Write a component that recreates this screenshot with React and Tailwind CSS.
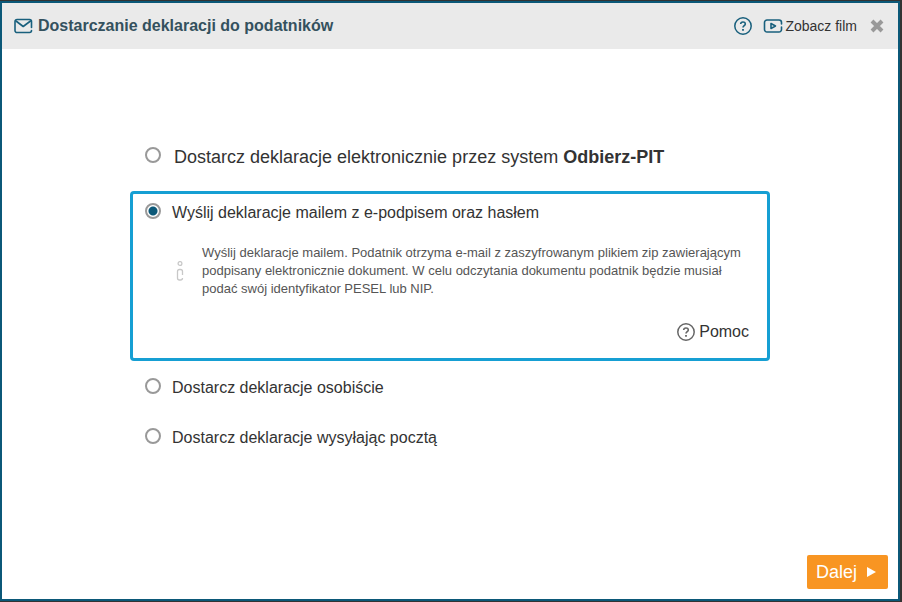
const options = [
  {
    id: 'system',
    large: true,
    label: (
      <>
        Dostarcz deklaracje elektronicznie przez system <b>Odbierz-PIT</b>
      </>
    ),
  },
  {
    id: 'mail',
    label: 'Wyślij deklaracje mailem z e-podpisem oraz hasłem',
    info: 'Wyślij deklaracje mailem. Podatnik otrzyma e-mail z zaszyfrowanym plikiem zip zawierającym podpisany elektronicznie dokument. W celu odczytania dokumentu podatnik będzie musiał podać swój identyfikator PESEL lub NIP.',
  },
  { id: 'personal', label: 'Dostarcz deklaracje osobiście' },
  { id: 'post', label: 'Dostarcz deklaracje wysyłając pocztą' },
]

function MailIcon() {
  return (
    <svg width="20" height="16" viewBox="0 0 20 16" fill="none" stroke="#19607d" strokeWidth="1.6" strokeLinecap="round" strokeLinejoin="round" aria-hidden="true">
      <path d="M18.5 9.5V3.5A2 2 0 0 0 16.5 1.5H4.5A2 2 0 0 0 2 3.5V12.5A2 2 0 0 0 4.500 14.500H16.500A2 2 0 0 0 18.500 12.500" />
      <path d="M3 3L10.200 8.500L17.500 3" />
    </svg>
  )
}

function HelpIcon() {
  return (
    <svg width="20" height="20" viewBox="0 0 20 20" fill="none" stroke="currentColor" aria-hidden="true">
      <circle cx="10" cy="10" r="8.200" strokeWidth="1.500" />
      <path d="M7.700 8.100C7.700 5.300 12.300 5.300 12.300 8C12.300 9.700 10 9.700 10 11.600" strokeWidth="1.600" />
      <path d="M10 13V14.700" strokeWidth="1.800" />
    </svg>
  )
}

function FilmIcon() {
  return (
    <svg width="20" height="14" viewBox="0 0 20 14" fill="none" stroke="#19607d" strokeLinecap="round" strokeLinejoin="round" aria-hidden="true">
      <path d="M18.500 5V3.500A2.500 2.500 0 0 0 16 1H4A2.500 2.500 0 0 0 1.500 3.500V10.500A2.500 2.500 0 0 0 4 13H16A2.500 2.500 0 0 0 18.500 10.500V8" strokeWidth="1.600" />
      <path d="M8 4.500V9.500L12.500 7Z" strokeWidth="1.600" />
    </svg>
  )
}

function InfoIcon() {
  return (
    <svg className="shrink-0" width="8" height="20" viewBox="0 0 8 20" fill="none" stroke="#c8c8c8" strokeWidth="1.300" aria-hidden="true">
      <circle cx="4" cy="2.500" r="1.900" />
      <path d="M6.500 14V10.500Q6.500 8.500 4.500 8.500H3.500Q1.500 8.500 1.500 10.500V17Q1.500 19 3.500 19H4.500Q6.500 19 6.500 17" />
    </svg>
  )
}

function Option({ option }) {
  return (
    <div className={option.info ? 'rounded border-3 border-[#169fd3] px-3 pt-[7px] pb-[14px]' : 'px-[15px]'}>
      <div className="flex items-start">
        <input
          type="radio"
          name="delivery"
          id={option.id}
          defaultChecked={option.id === 'mail'}
          className="mt-[2px] size-4 shrink-0 appearance-none rounded-full border-2 border-[#999] bg-white checked:bg-[radial-gradient(circle,#0b5878_4px,transparent_5px)]"
        />
        <label htmlFor={option.id} className={option.large ? 'pl-[13px] text-lg/6' : 'pl-[11px] text-base/6'}>
          {option.label}
        </label>
      </div>
      {option.info && (
        <>
          <div className="mt-[19px] flex items-center pl-[31px]">
            <InfoIcon />
            <p className="pl-[18px] text-[13px]/[18px] text-[#555]">{option.info}</p>
          </div>
          <div className="mt-[22px] flex justify-end pr-[6px]">
            <button type="button" className="flex items-center gap-[3px] text-base/6">
              <span className="text-[#666]">
                <HelpIcon />
              </span>
              Pomoc
            </button>
          </div>
        </>
      )}
    </div>
  )
}

export default function App() {
  return (
    <div className="flex h-screen flex-col bg-[#333] pt-px pr-[2px] pb-px font-['Liberation_Sans',Arial,sans-serif] text-[#333]">
      <div className="flex flex-1 flex-col border-2 border-[#0b5878] bg-white">
        <header className="flex h-[46px] items-center justify-between bg-[#eaeaea] pr-[14px] pl-[11px]">
          <h1 className="flex items-center gap-[5px] text-base font-bold text-[#34515e]">
            <MailIcon />
            Dostarczanie deklaracji do podatników
          </h1>
          <div className="flex items-center">
            <button type="button" aria-label="Pomoc" className="text-[#19607d]">
              <HelpIcon />
            </button>
            <a href="#film" className="ml-[10px] flex items-center gap-[2px] text-sm">
              <FilmIcon />
              Zobacz film
            </a>
            <button type="button" aria-label="Zamknij" className="ml-[13px]">
              <svg width="14" height="14" viewBox="0 0 14 14" stroke="#999" strokeWidth="4" aria-hidden="true">
                <path d="M2 2L12 12M12 2L2 12" />
              </svg>
            </button>
          </div>
        </header>

        <main className="mx-auto flex w-full max-w-[640px] flex-1 flex-col pt-24">
          <fieldset aria-label="Sposób dostarczenia deklaracji" className="flex flex-col">
            <Option option={options[0]} />
            <div className="mt-[22px] mb-[15px]">
              <Option option={options[1]} />
            </div>
            <div className="flex flex-col gap-[26px]">
              <Option option={options[2]} />
              <Option option={options[3]} />
            </div>
          </fieldset>
        </main>

        <footer className="flex justify-end p-[10px]">
          <button type="button" className="flex h-[34px] items-center gap-[10px] rounded-xs bg-[#f89522] pr-3 pl-[9px] text-lg text-white">
            Dalej
            <svg width="9" height="10" viewBox="0 0 9 10" fill="currentColor" aria-hidden="true">
              <path d="M0 0L9 5L0 10Z" />
            </svg>
          </button>
        </footer>
      </div>
    </div>
  )
}
